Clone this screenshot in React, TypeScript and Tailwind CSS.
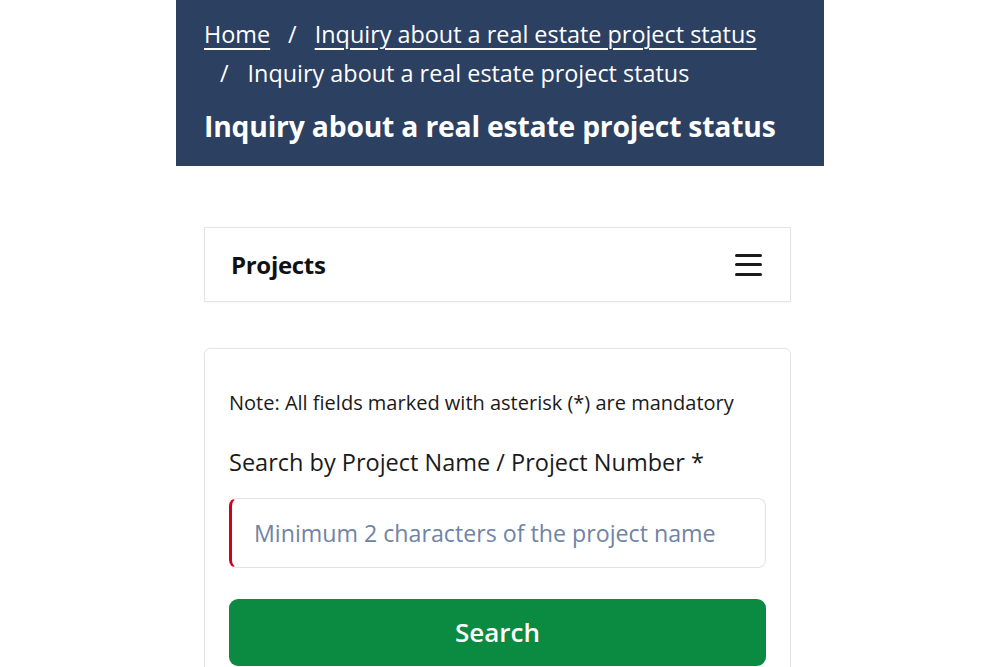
const font = { fontFamily: "'Open Sans', 'Noto Sans', sans-serif" };

const App = () => {
    return (
        <div className="min-h-[667px] bg-white" style={font}>
            <div className="w-[648px] mx-auto">
                <div className="bg-[#2c4062] pl-7 pr-4 pt-[15px] pb-[22px] text-white">
                    <div className="text-[23.4px] leading-[39px]">
                        <div className="flex items-center">
                            <a className="underline underline-offset-[5px] decoration-[1.5px]">Home</a>
                            <span className="mx-[18px]">/</span>
                            <a className="underline underline-offset-[5px] decoration-[1.5px]">Inquiry about a real estate project status</a>
                        </div>
                        <div className="flex items-center pl-[16px]">
                            <span className="mr-[19px]">/</span>
                            <span>Inquiry about a real estate project status</span>
                        </div>
                    </div>
                    <h1 className="text-[28.3px] font-bold leading-[36px] mt-[15px] tracking-[-0.2px]">Inquiry about a real estate project status</h1>
                </div>
                <div className="pl-7 pr-[33px] pt-[61px]">
                    <div className="border border-[#e2e4e7] h-[75px] flex items-center justify-between pl-[26px] pr-[28px] shadow-[0_1px_3px_rgba(0,0,0,0.04)]">
                        <span className="text-[24px] font-bold text-[#111] tracking-[-0.3px]">Projects</span>
                        <div className="flex flex-col gap-[6.5px] w-[27px]">
                            <span className="h-[3px] bg-[#1a1a1a] rounded-sm"></span>
                            <span className="h-[3px] bg-[#1a1a1a] rounded-sm"></span>
                            <span className="h-[3px] bg-[#1a1a1a] rounded-sm"></span>
                        </div>
                    </div>
                    <div className="mt-[46px] border border-[#e2e4e7] rounded-md px-6 pt-[42px] pb-6">
                        <p className="text-[20px] text-[#1a1a1a] leading-6">Note: All fields marked with asterisk (*) are mandatory</p>
                        <p className="text-[23.5px] text-[#1a1a1a] leading-7 mt-[33px]">Search by Project Name / Project Number *</p>
                        <div className="mt-[22px] h-[70px] rounded-lg border border-[#dfe2e6] border-l-[3px] border-l-[#d0021b] flex items-center pl-[22px]">
                            <span className="text-[23.2px] text-[#6f84a6]">Minimum 2 characters of the project name</span>
                        </div>
                        <button className="mt-[31px] w-full h-[67px] rounded-[9px] bg-[#0b8a42] text-white text-[26px] font-semibold">Search</button>
                    </div>
                </div>
            </div>
        </div>
    );
};

export default App;
